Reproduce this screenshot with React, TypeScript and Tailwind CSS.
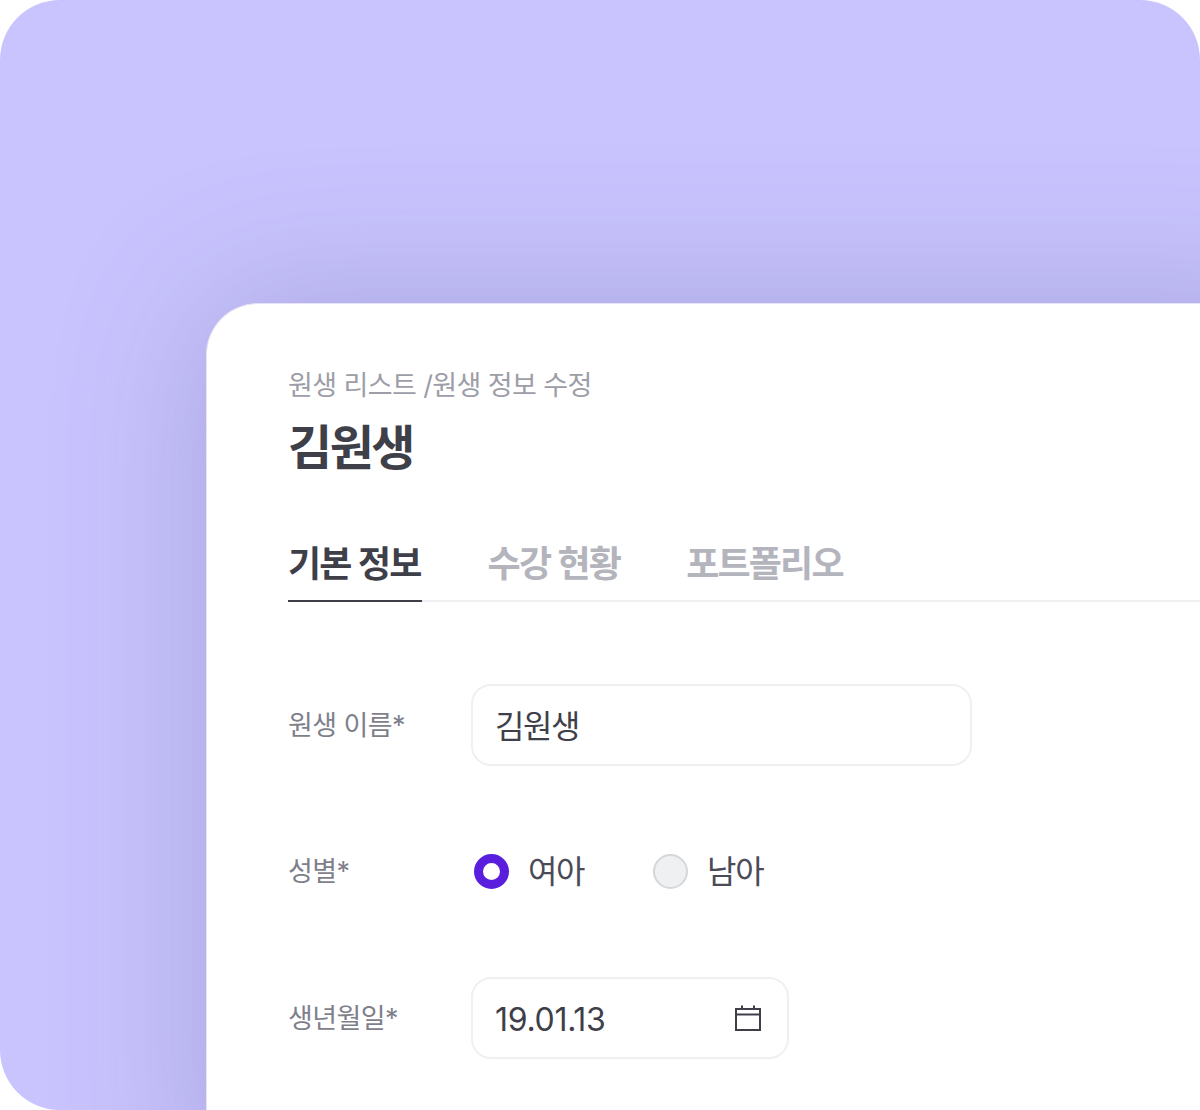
const font = "font-['Inter','Noto_Sans_CJK_KR',sans-serif]";

function CalendarIcon() {
  return (
    <svg width="28" height="28" viewBox="0 0 28 28" fill="none" stroke="#3f3f4a" strokeWidth="2" className="shrink-0">
      <rect x="2" y="5" width="24" height="21" />
      <path d="M2 10.500h24" />
      <path d="M8 1.500v3.500M20 1.500v3.500" />
    </svg>
  );
}

function Row({ label, children, className }: { label: string; children: React.ReactNode; className: string }) {
  return (
    <div className={`flex items-center ${className}`}>
      <div className="w-[183px] shrink-0 pt-[2px] text-[27px] leading-[36px] tracking-[-0.6px] text-[#7f7f8c]">{label}</div>
      {children}
    </div>
  );
}

function Radio({ checked, label }: { checked?: boolean; label: string }) {
  return (
    <div className="flex items-center gap-[19px]">
      {checked ? (
        <span className="box-border size-[35px] rounded-full border-[9px] border-[#5a1fdc] bg-white" />
      ) : (
        <span className="box-border size-[35px] rounded-full border-2 border-[#d6d7da] bg-[#eff0f2]" />
      )}
      <span className="pt-[1px] text-[32px] leading-[40px] tracking-[-1.4px] text-[#4b4b57]">{label}</span>
    </div>
  );
}

export default function App() {
  return (
    <div className={`h-[1110px] w-[1200px] overflow-hidden bg-white ${font}`}>
      <div className="h-[1110px] rounded-[60px] bg-[#c9c4fe] pl-[206px] pt-[303px]">
        <div className="h-[900px] w-[1100px] rounded-tl-[52px] border-l border-t border-[#e6e4f4] bg-white pl-[81px] pt-[64px] shadow-[0_0_150px_rgba(90,90,140,0.3)]">
          <div className="text-[27px] leading-[36px] tracking-[-0.6px] text-[#9d9da8]">원생 리스트 /원생 정보 수정</div>
          <h1 className="mt-[12px] text-[48px] font-bold leading-[64px] tracking-[-2.5px] text-[#3f3f4a]">김원생</h1>
          <div className="mt-[56px] flex h-[66px] w-[1000px] items-start gap-[66px] border-b-2 border-[#eff0f2]">
            <div className="-mb-[2px] h-[66px] border-b-2 border-[#3f3f4a] pr-[1px] text-[36px] font-semibold leading-[56px] tracking-[-1.8px] text-[#3f3f4a]">기본 정보</div>
            <div className="text-[36px] font-semibold leading-[56px] tracking-[-1.8px] text-[#b4b4bd]">수강 현황</div>
            <div className="text-[36px] font-semibold leading-[56px] tracking-[-1.8px] text-[#b4b4bd]">포트폴리오</div>
          </div>
          <Row label="원생 이름*" className="mt-[82px]">
            <div className="flex h-[82px] w-[501px] items-center rounded-[20px] border-2 border-[#eff0f2] px-[22px] pt-[3px] text-[32px] tracking-[-1.5px] text-[#3f3f4a]">김원생</div>
          </Row>
          <Row label="성별*" className="mt-[64px] h-[82px]">
            <div className="flex items-center gap-[69px] pl-[3px]">
              <Radio checked label="여아" />
              <Radio label="남아" />
            </div>
          </Row>
          <Row label="생년월일*" className="mt-[65px]">
            <div className="flex h-[82px] w-[318px] items-center justify-between rounded-[20px] border-2 border-[#eff0f2] pl-[22px] pr-[25px] text-[32px] tracking-[-0.3px] text-[#3f3f4a]">
              <span className="pt-[3px]">19.01.13</span>
              <CalendarIcon />
            </div>
          </Row>
        </div>
      </div>
    </div>
  );
}
